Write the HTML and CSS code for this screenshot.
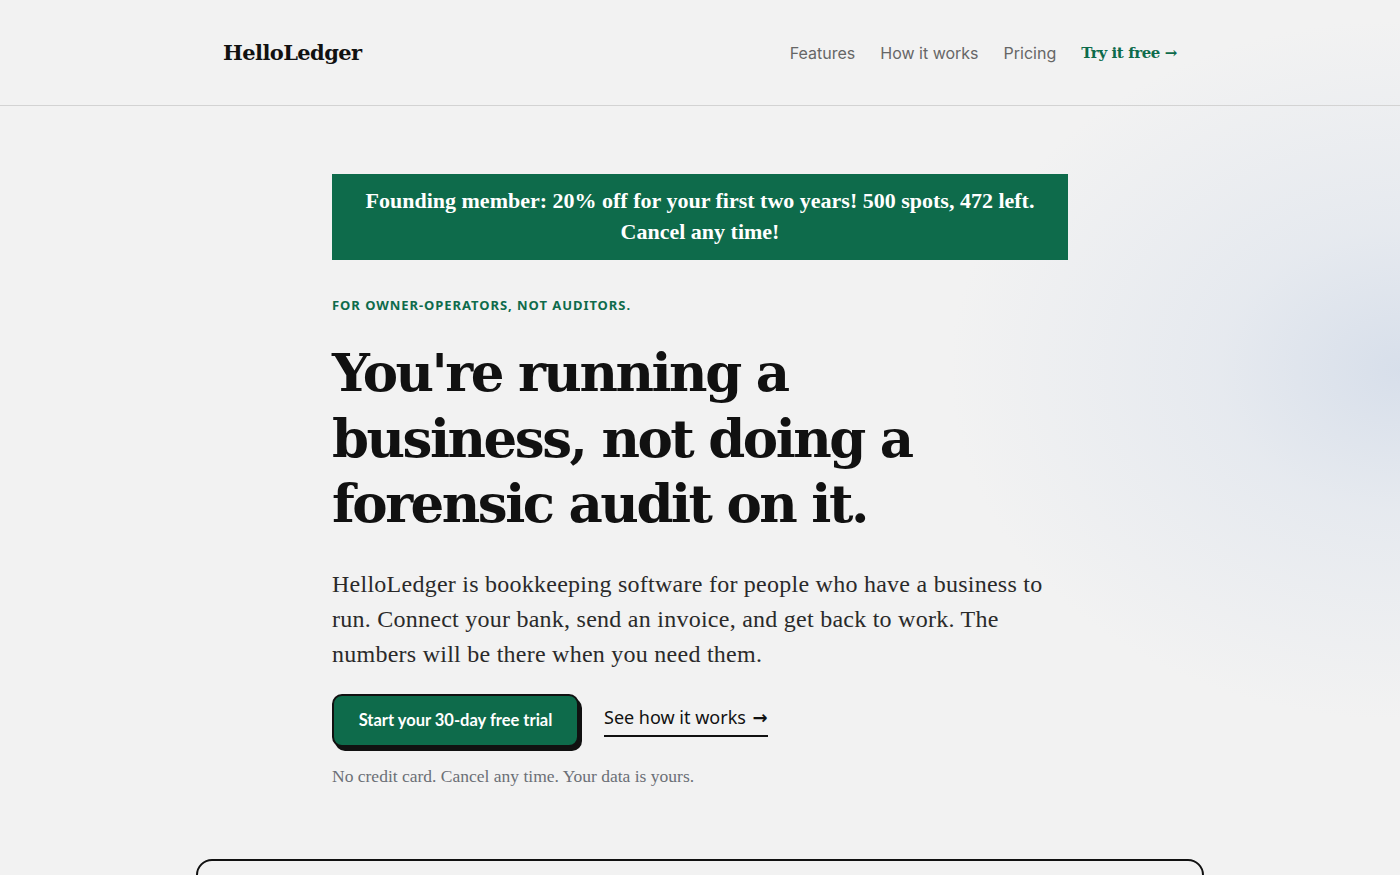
FILE: index.html
```html
<!DOCTYPE html>
<html lang="en">
<head>
<meta charset="utf-8">
<title>HelloLedger</title>
<link rel="stylesheet" href="styles.css">
</head>
<body>
<div class="glow"></div>
<header class="site-header">
  <div class="header-inner">
    <a class="logo" href="#">HelloLedger</a>
    <nav class="nav">
      <a href="#" class="nav-link">Features</a>
      <a href="#" class="nav-link">How it works</a>
      <a href="#" class="nav-link">Pricing</a>
      <a href="#" class="nav-cta">Try it free →</a>
    </nav>
  </div>
</header>
<main class="hero">
  <div class="banner">Founding member: 20% off for your first two years! 500 spots, 472 left. Cancel any time!</div>
  <p class="eyebrow">FOR OWNER-OPERATORS, NOT AUDITORS.</p>
  <h1 class="headline">You're running a business, not doing a forensic audit on it.</h1>
  <p class="lede">HelloLedger is bookkeeping software for people who have a business to run. Connect your bank, send an invoice, and get back to work. The numbers will be there when you need them.</p>
  <div class="actions">
    <a href="#" class="btn-primary">Start your 30-day free trial</a>
    <a href="#" class="btn-link">See how it works <span class="arrow">→</span></a>
  </div>
  <p class="note">No credit card. Cancel any time. Your data is yours.</p>
</main>
<section class="preview"></section>
</body>
</html>
```
FILE: styles.css
```css
* { box-sizing: border-box; }
html, body { margin: 0; padding: 0; }
body {
  background: #f2f2f2;
  color: #111;
  font-family: "Liberation Serif", serif;
  overflow: hidden;
  position: relative;
  height: 875px;
}
a { text-decoration: none; color: inherit; }
.glow {
  position: absolute;
  right: 0;
  top: 20px;
  width: 500px;
  height: 700px;
  background: radial-gradient(ellipse 450px 350px at 100% 50%, rgba(214, 222, 234, 0.95) 0%, rgba(222, 228, 237, 0.6) 40%, rgba(242, 242, 242, 0) 100%);
  pointer-events: none;
  z-index: 0;
}
.site-header {
  position: relative;
  z-index: 1;
  border-bottom: 1px solid #d3d3d3;
  height: 106px;
}
.header-inner {
  width: 954px;
  margin: 0 auto;
  height: 105px;
  display: flex;
  align-items: center;
  justify-content: space-between;
}
.logo {
  font-family: "DejaVu Serif", serif;
  font-weight: 700;
  font-size: 21px;
  letter-spacing: -0.6px;
  color: #111;
}
.nav { display: flex; align-items: center; gap: 25px; }
.nav-link {
  font-family: "Inter", sans-serif;
  font-size: 16px;
  color: #666;
}
.nav-cta {
  font-family: "DejaVu Serif", serif;
  font-weight: 700;
  font-size: 15px;
  letter-spacing: -0.4px;
  color: #0e6b4b;
}
.hero {
  position: relative;
  z-index: 1;
  width: 736px;
  margin: 68px auto 0;
}
.banner {
  background: #0e6b4b;
  color: #fff;
  font-family: "Liberation Serif", serif;
  font-weight: 700;
  font-size: 22px;
  line-height: 31px;
  text-align: center;
  padding: 11px 30px 13px;
}
.eyebrow {
  margin: 36px 0 0;
  font-family: "Noto Sans", sans-serif;
  font-weight: 700;
  font-size: 13px;
  line-height: 18px;
  letter-spacing: 0.95px;
  color: #0e6b4b;
}
.headline {
  margin: 26px 0 0;
  max-width: 600px;
  font-family: "DejaVu Serif", serif;
  font-weight: 700;
  font-size: 53px;
  line-height: 65.5px;
  letter-spacing: -2.5px;
  color: #111;
}
.lede {
  margin: 30px 0 0;
  font-family: "Liberation Serif", serif;
  font-size: 24px;
  line-height: 35px;
  letter-spacing: 0.25px;
  color: #2a2a2a;
}
.actions {
  margin-top: 22px;
  display: flex;
  align-items: center;
  gap: 25px;
}
.btn-primary {
  display: inline-flex;
  align-items: center;
  justify-content: center;
  width: 247px;
  height: 53px;
  background: #0e6b4b;
  border: 2px solid #111;
  border-radius: 10px;
  box-shadow: 3px 4px 0 #111;
  color: #fff;
  font-family: "Lato", sans-serif;
  font-weight: 700;
  font-size: 16.5px;
}
.btn-link {
  font-family: "Noto Sans", sans-serif;
  font-size: 18px;
  color: #111;
  padding-bottom: 6px;
  border-bottom: 2px solid #111;
  margin-top: 2px;
}
.arrow {
  font-family: "DejaVu Sans", sans-serif;
  font-weight: 700;
  font-size: 18px;
  margin-left: 2px;
}
.note {
  margin: 17px 0 0;
  font-family: "Liberation Serif", serif;
  font-size: 17.5px;
  line-height: 24px;
  color: #6b6f76;
}
.preview {
  position: relative;
  z-index: 1;
  width: 1008px;
  height: 200px;
  margin: 71px auto 0;
  border: 2px solid #111;
  border-radius: 16px;
  background: #f2f2f2;
}
```
